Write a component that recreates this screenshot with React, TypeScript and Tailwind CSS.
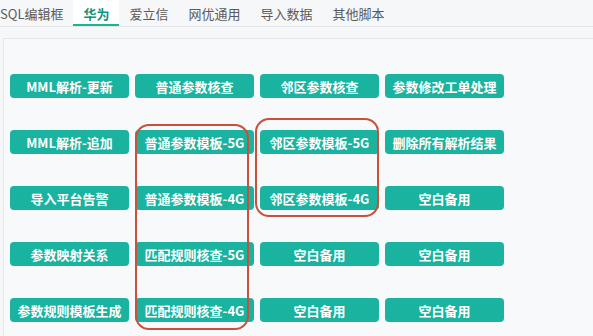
import React from "react";

const tabs = ["SQL编辑框", "华为", "爱立信", "网优通用", "导入数据", "其他脚本"];
const buttons = [
  "MML解析-更新", "普通参数核查", "邻区参数核查", "参数修改工单处理",
  "MML解析-追加", "普通参数模板-5G", "邻区参数模板-5G", "删除所有解析结果",
  "导入平台告警", "普通参数模板-4G", "邻区参数模板-4G", "空白备用",
  "参数映射关系", "匹配规则核查-5G", "空白备用", "空白备用",
  "参数规则模板生成", "匹配规则核查-4G", "空白备用", "空白备用",
];

export default function App() {
  return (
    <div
      className="relative w-[593px] h-[336px] overflow-hidden bg-[#f6f7f9]"
      style={{ fontFamily: '"Noto Sans CJK SC", "Noto Sans", sans-serif' }}
    >
      <div className="h-[27px] border-b border-[#e2e4e8]">
        <div className="flex -ml-[10px] h-[26px]">
          {tabs.map((t, i) => (
            <div
              key={i}
              className={
                "px-[10px] h-[26px] pt-[2px] flex items-center text-[13px] leading-none border-b-2 " +
                (i === 1
                  ? "border-[#1ab394] text-[#17917f] font-bold bg-white"
                  : "border-transparent text-[#5a5a5a]")
              }
            >
              {t}
            </div>
          ))}
        </div>
      </div>
      <div className="h-[11px]" />
      <div className="ml-[3px] h-[300px] border-t border-l border-[#e6e7ea] bg-[#f8f9fb] pt-[35px] pl-[6px]">
        <div className="grid grid-cols-4 w-[494px] gap-x-[6px] gap-y-[32px]">
          {buttons.map((b, i) => (
            <div
              key={i}
              className="h-[24px] rounded-[4px] bg-[#1ab39f] text-white text-[13px] font-bold flex items-center justify-center whitespace-nowrap leading-none"
            >
              {b}
            </div>
          ))}
        </div>
      </div>
      <div className="absolute left-[135px] top-[124px] w-[114px] h-[206px] border-2 border-[#c9503a] rounded-[14px] pointer-events-none" />
      <div className="absolute left-[255px] top-[118px] w-[124px] h-[99px] border-2 border-[#c9503a] rounded-[14px] pointer-events-none" />
    </div>
  );
}
